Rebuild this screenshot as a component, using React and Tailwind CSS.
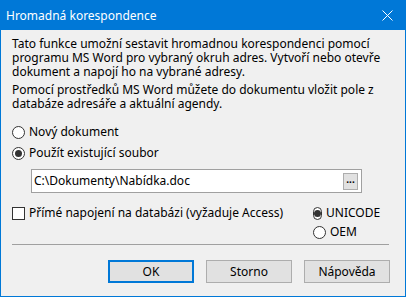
import React from 'react';

const font = { fontFamily: '"Segoe UI", "Noto Sans", "Liberation Sans", sans-serif' };

function Radio({ checked, label }) {
  return (
    <div className="flex items-center gap-[4px] h-[16px]">
      <span className="w-[13px] h-[13px] rounded-full border border-[#333] bg-white flex items-center justify-center">
        {checked && <span className="w-[7px] h-[7px] rounded-full bg-[#333]" />}
      </span>
      <span>{label}</span>
    </div>
  );
}

function DlgButton({ children, primary }) {
  return (
    <button
      className={
        'w-[86px] h-[23px] bg-[#e1e1e1] text-[12px] text-black flex items-center justify-center ' +
        (primary ? 'border-2 border-[#0078d7]' : 'border border-[#adadad]')
      }
    >
      {children}
    </button>
  );
}

export default function App() {
  return (
    <div
      style={font}
      className="w-[406px] h-[297px] border border-[#0078d7] bg-[#f0f0f0] flex flex-col text-[12px] text-black leading-[14px]"
    >
      {/* title bar */}
      <div className="h-[29px] bg-[#0078d7] flex items-center justify-between pl-[5px] pr-[12px] text-white">
        <span>Hromadná korespondence</span>
        <svg width="11" height="11" viewBox="0 0 11 11" className="stroke-white">
          <path d="M0.5 0.5 L10.5 10.5 M10.5 0.5 L0.5 10.5" strokeWidth="1" />
        </svg>
      </div>

      <div className="flex-1 flex flex-col px-[11px] pt-[7px]">
        <p>
          Tato funkce umožní sestavit hromadnou korespondenci pomocí<br />
          programu MS Word pro vybraný okruh adres. Vytvoří nebo otevře<br />
          dokument a napojí ho na vybrané adresy.
        </p>
        <p className="mt-[4px]">
          Pomocí prostředků MS Word můžete do dokumentu vložit pole z<br />
          databáze adresáře a aktuální agendy.
        </p>

        <div className="mt-[13px] flex flex-col gap-[5px]">
          <Radio label="Nový dokument" />
          <Radio checked label="Použít existující soubor" />
        </div>

        <div className="mt-[8px] ml-[19px] w-[331px] h-[24px] border border-[#a0a0a0] bg-white flex items-center justify-between pl-[2px] pr-[3px]">
          <span>C:\Dokumenty\Nabídka.doc</span>
          <span className="w-[15px] h-[17px] bg-[#e1e1e1] border border-[#adadad] flex items-end justify-center pb-[4px] text-[10px] font-bold leading-[6px]">
            ···
          </span>
        </div>

        <div className="mt-[12px] flex justify-between pr-[15px]">
          <div className="flex items-center gap-[4px] h-[16px]">
            <span className="w-[13px] h-[13px] border border-[#333] bg-white" />
            <span>Přímé napojení na databázi (vyžaduje Access)</span>
          </div>
          <div className="flex flex-col gap-[3px] w-[66px]">
            <Radio checked label="UNICODE" />
            <Radio label="OEM" />
          </div>
        </div>

        <div className="mt-[4px] h-px bg-[#a0a0a0] mr-[5px]" />

        <div className="mt-[15px] flex justify-end gap-[12px] pr-[4px]">
          <DlgButton primary>OK</DlgButton>
          <DlgButton>Storno</DlgButton>
          <DlgButton>Nápověda</DlgButton>
        </div>
      </div>
    </div>
  );
}
